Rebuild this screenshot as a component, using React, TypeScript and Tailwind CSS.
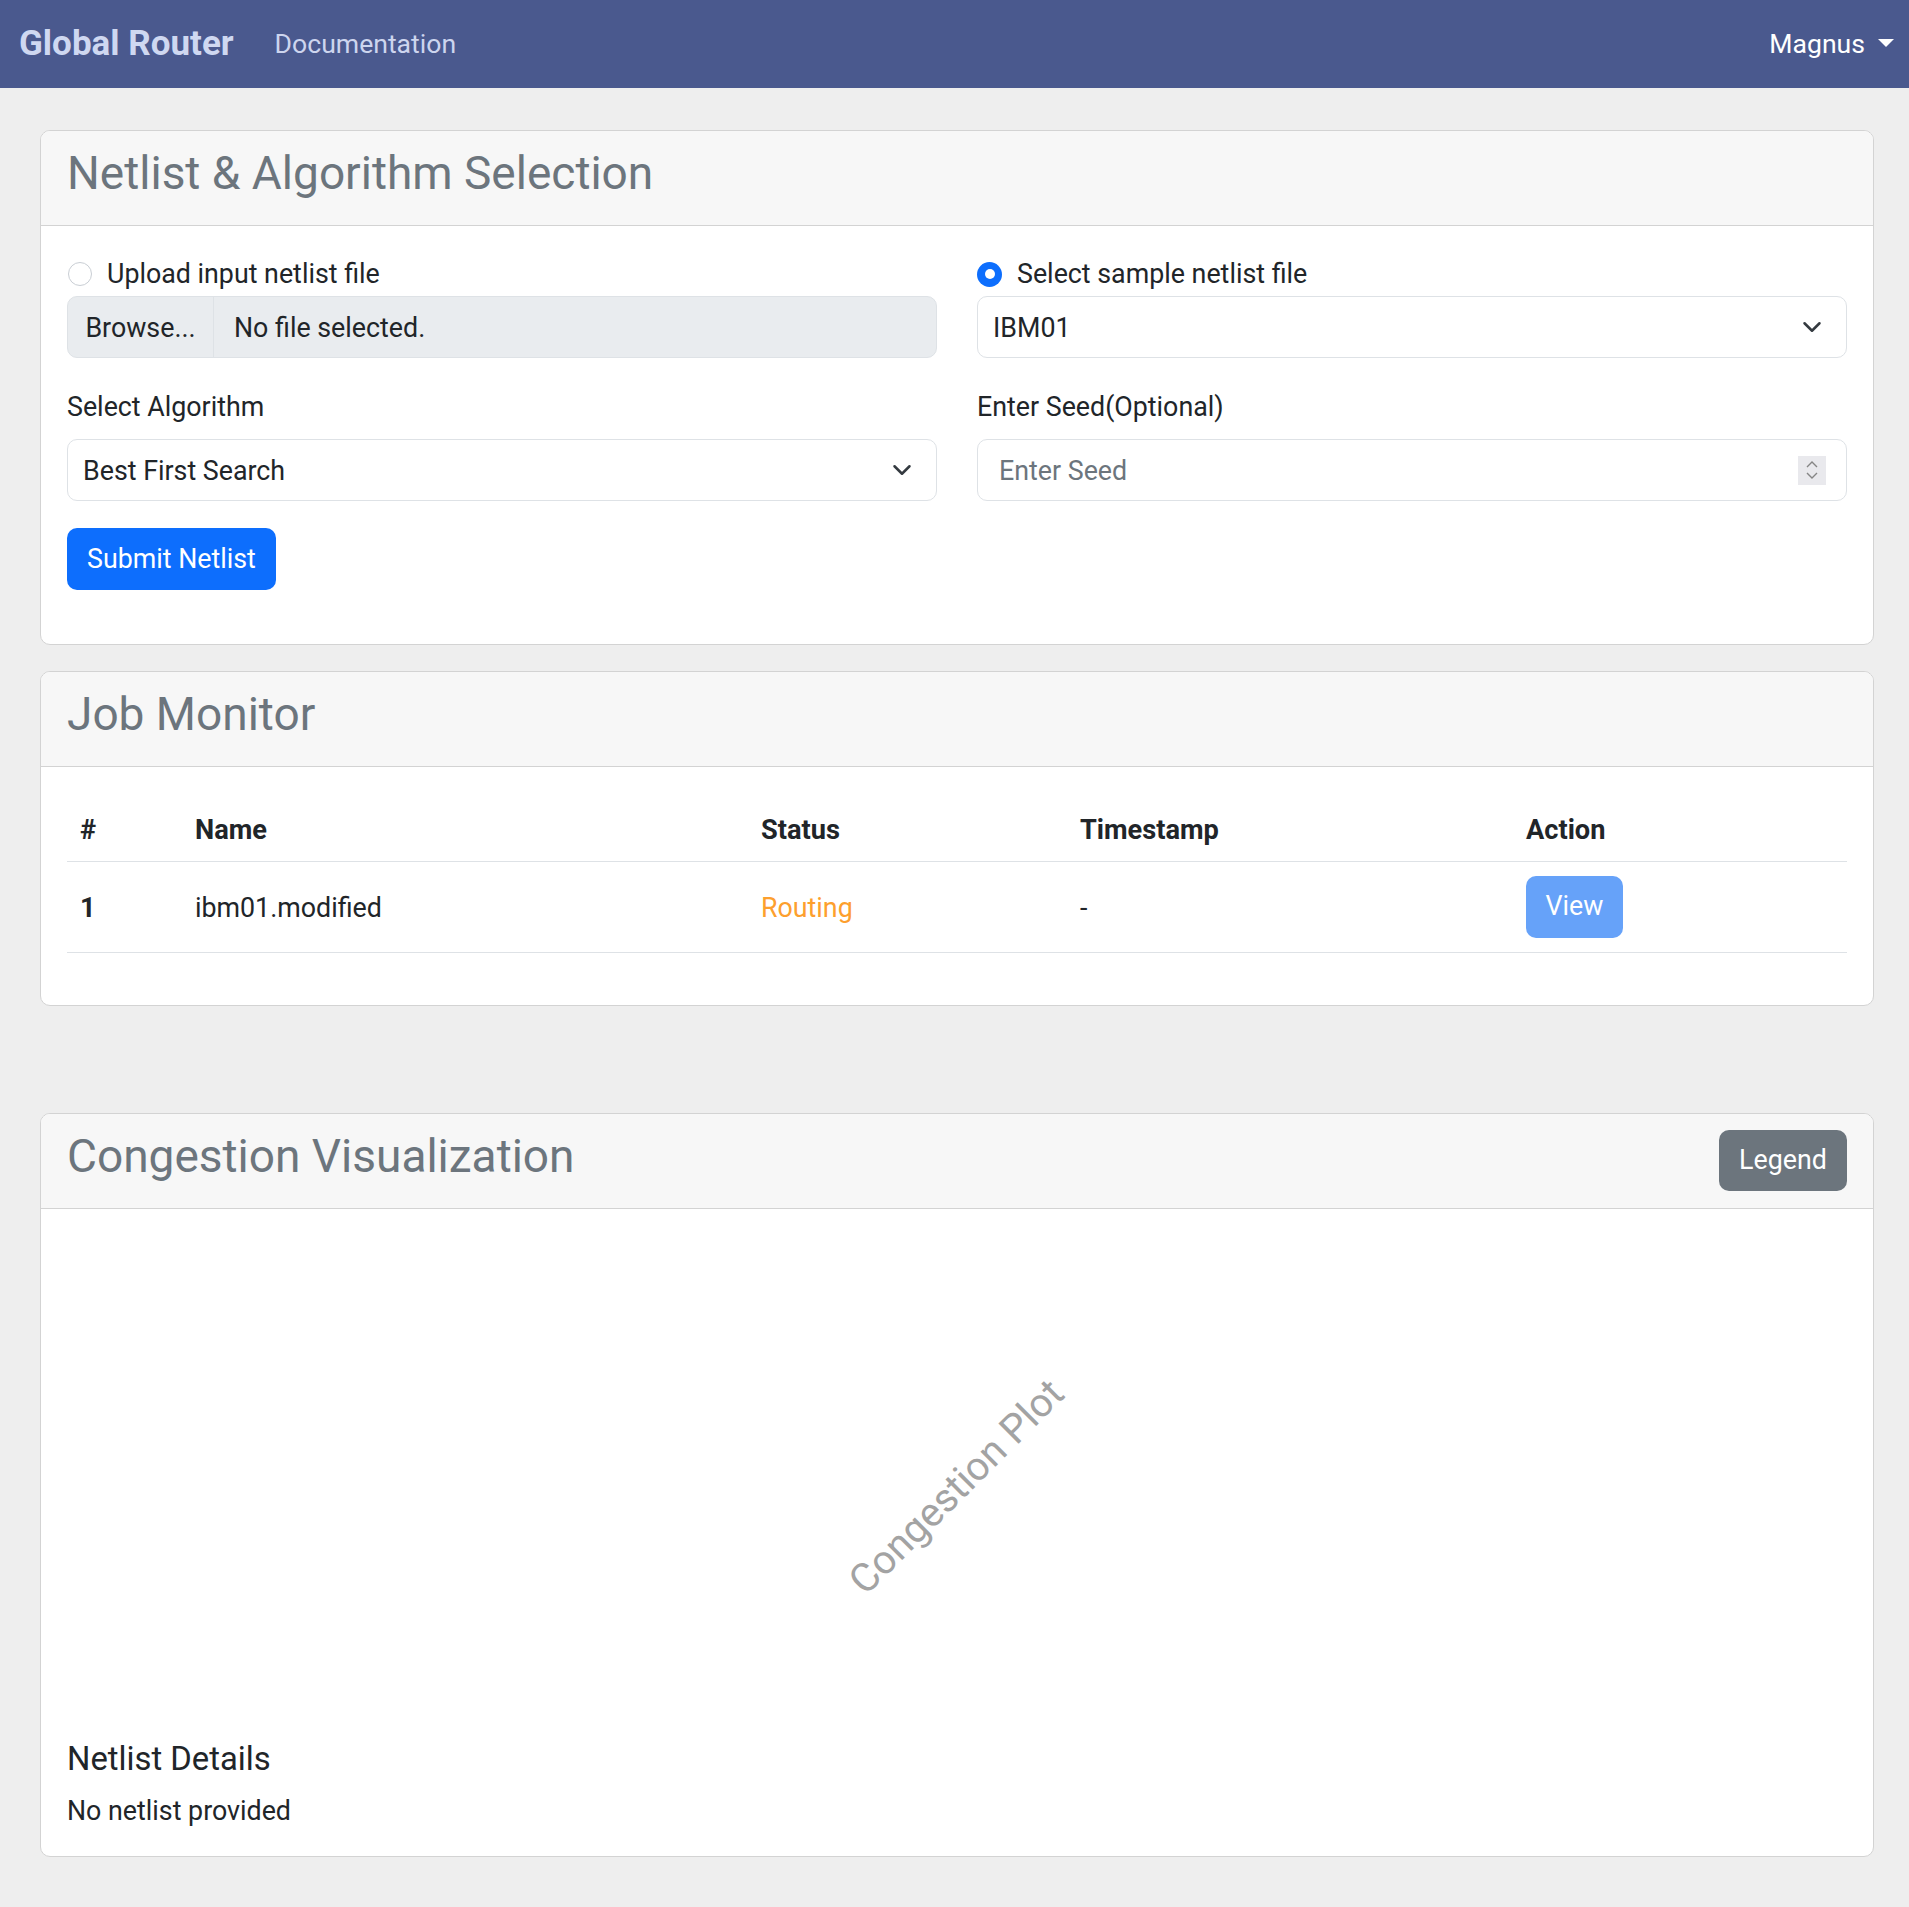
import React from 'react';

function Chevron() {
  return (
    <svg viewBox="0 0 16 16" className="w-[20px] h-[20px] mt-[-3px]" fill="none" stroke="#343a40" strokeWidth="2" strokeLinecap="round" strokeLinejoin="round">
      <path d="m2 5 6 6 6-6" />
    </svg>
  );
}

function Card({ title, action, children, className = '' }: { title: string; action?: React.ReactNode; children: React.ReactNode; className?: string }) {
  return (
    <section className={`bg-white border border-[#d3d3d3] rounded-[10px] overflow-hidden ${className}`}>
      <div className="h-[95px] bg-[#f7f7f7] border-b border-[#d3d3d3] px-[26px] flex items-center justify-between">
        <h3 className="text-[46px] leading-[1.2] text-[#6c757d] pb-[8px]">{title}</h3>
        {action}
      </div>
      {children}
    </section>
  );
}

export default function App() {
  return (
    <div className="min-h-screen bg-[#eeeeee] font-[Roboto,'Liberation_Sans',Arial,sans-serif] text-[26.8px] leading-[38.4px] text-[#212529] pb-[50px]">
      <nav className="h-[88px] bg-[#4a598e] flex items-center justify-between pl-[19px] pr-[15px]">
        <div className="flex items-center">
          <a href="#" className="text-[35px] leading-[48px] font-bold text-[#cfd8f1]">Global Router</a>
          <a href="#" className="ml-[41px] text-[26.6px] text-[#cdd5ee]">Documentation</a>
        </div>
        <a href="#" className="flex items-center text-white text-[26.6px]">
          Magnus
          <span className="ml-[13px] w-0 h-0 border-l-[8px] border-r-[8px] border-t-[8px] border-l-transparent border-r-transparent border-t-white mt-[-2px]" />
        </a>
      </nav>

      <main className="pl-[40px] pr-[35px] pt-[42px]">
        <Card title="Netlist & Algorithm Selection">
          <div className="px-[26px] pt-[28px] pb-[54px]">
            <div className="grid grid-cols-2 gap-x-[40px]">
              <div>
                <label className="h-[38px] flex items-center pt-[2px]">
                  <span className="w-[24px] h-[24px] rounded-full border border-[#c9ced4] bg-white mr-[15px] ml-[1px]" />
                  Upload input netlist file
                </label>
                <div className="mt-[4px] h-[62px] flex rounded-[10px] border border-[#dee2e6] bg-[#e9ecef] overflow-hidden">
                  <span className="w-[146px] border-r border-[#dee2e6] flex items-center justify-center pt-[3px]">Browse...</span>
                  <span className="flex items-center pl-[20px] pt-[3px]">No file selected.</span>
                </div>
                <div className="mt-[30px] h-[38px] flex items-center pt-[1px]">Select Algorithm</div>
                <div className="mt-[13px] h-[62px] flex items-center justify-between rounded-[10px] border border-[#dee2e6] bg-white pl-[15px] pr-[24px] pt-[3px]">
                  <span>Best First Search</span>
                  <Chevron />
                </div>
              </div>
              <div>
                <label className="h-[38px] flex items-center pt-[2px]">
                  <span className="w-[25px] h-[25px] rounded-full bg-[#0d6efd] mr-[15px] flex items-center justify-center">
                    <span className="w-[10px] h-[10px] rounded-full bg-white" />
                  </span>
                  Select sample netlist file
                </label>
                <div className="mt-[4px] h-[62px] flex items-center justify-between rounded-[10px] border border-[#dee2e6] bg-white pl-[15px] pr-[24px] pt-[3px]">
                  <span>IBM01</span>
                  <Chevron />
                </div>
                <div className="mt-[30px] h-[38px] flex items-center pt-[1px]">Enter Seed(Optional)</div>
                <div className="mt-[13px] h-[62px] flex items-center justify-between rounded-[10px] border border-[#dee2e6] bg-white pl-[21px] pr-[20px]">
                  <span className="text-[#6c757d] pt-[3px]">Enter Seed</span>
                  <span className="w-[28px] h-[29px] bg-[#e9e9ed] flex flex-col items-center justify-center gap-[4px]">
                    <svg viewBox="0 0 12 7" className="w-[12px] h-[7px]" fill="none" stroke="#858585" strokeWidth="1.4"><path d="M1 6 6 1 11 6" /></svg>
                    <svg viewBox="0 0 12 7" className="w-[12px] h-[7px]" fill="none" stroke="#858585" strokeWidth="1.4"><path d="M1 1 6 6 11 1" /></svg>
                  </span>
                </div>
              </div>
            </div>
            <button className="mt-[27px] h-[62px] px-[20px] rounded-[10px] bg-[#0d6efd] text-white">Submit Netlist</button>
          </div>
        </Card>

        <Card title="Job Monitor" className="mt-[26px]">
          <div className="px-[26px] pt-[30px] pb-[52px]">
            <table className="w-full table-fixed border-collapse text-left">
              <thead>
                <tr className="h-[64px] border-b border-[#dee2e6]">
                  <th className="w-[115px] px-[13px] pt-[2px] font-bold text-[27.2px]">#</th>
                  <th className="w-[566px] px-[13px] pt-[2px] font-bold text-[27.2px]">Name</th>
                  <th className="w-[319px] px-[13px] pt-[2px] font-bold text-[27.2px]">Status</th>
                  <th className="w-[446px] px-[13px] pt-[2px] font-bold text-[27.2px]">Timestamp</th>
                  <th className="px-[13px] pt-[2px] font-bold text-[27.2px]">Action</th>
                </tr>
              </thead>
              <tbody>
                <tr className="h-[91px] border-b border-[#dee2e6]">
                  <td className="px-[13px] pt-[3px] font-bold text-[27.2px]">1</td>
                  <td className="px-[13px] pt-[3px]">ibm01.modified</td>
                  <td className="px-[13px] pt-[3px] text-[#fd9f2e]">Routing</td>
                  <td className="px-[13px] pt-[3px]">-</td>
                  <td className="px-[13px]">
                    <button className="h-[62px] w-[97px] rounded-[10px] bg-[#66a2f9] text-white">View</button>
                  </td>
                </tr>
              </tbody>
            </table>
          </div>
        </Card>

        <Card
          title="Congestion Visualization"
          className="mt-[107px]"
          action={<button className="h-[61px] w-[128px] rounded-[10px] bg-[#6c757d] text-white">Legend</button>}
        >
          <div className="px-[26px] pt-[28px] pb-[27px]">
            <div className="h-[502px] flex items-center justify-center">
              <span className="-rotate-45 text-[40px] text-[#a3a3a3] whitespace-nowrap">Congestion Plot</span>
            </div>
            <h5 className="text-[32.8px] leading-[1.2] h-[39px] pt-[1px]">Netlist Details</h5>
            <p className="mt-[13px] h-[38px] pt-[1px]">No netlist provided</p>
          </div>
        </Card>
      </main>
    </div>
  );
}
